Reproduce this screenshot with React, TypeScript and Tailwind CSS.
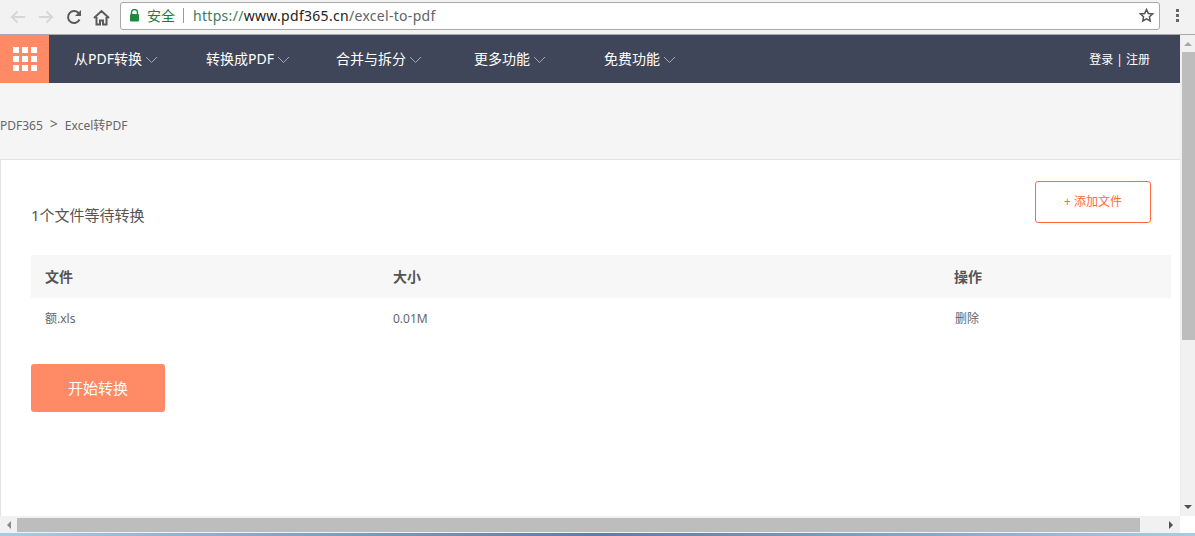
import React from "react";

const font = "font-['Noto_Sans','Noto_Sans_CJK_SC',sans-serif]";

const menus = [
  { label: "从PDF转换", cls: "w-[132px]" },
  { label: "转换成PDF", cls: "w-[130px]" },
  { label: "合并与拆分", cls: "w-[138px]" },
  { label: "更多功能", cls: "w-[130px]" },
  { label: "免费功能", cls: "w-[120px]" },
];

const Chevron = () => (
  <svg width="13" height="8" viewBox="0 0 13 8" fill="none" className="ml-[3px] mt-[3px]">
    <path d="M1 1l5.5 5.5L12 1" stroke="#a4a9b3" strokeWidth="1" />
  </svg>
);

const Toolbar = () => (
  <div className="h-[35px] shrink-0 flex items-center bg-[#f2f2f2] border-b border-[#a9a9a9]">
    <div className="w-[120px] shrink-0 flex items-center pl-[10px]">
      <svg width="16" height="16" viewBox="0 0 17 16" fill="none" stroke="#d6d6d6" strokeWidth="2">
        <path d="M16 8H2M8 2L2 8l6 6" />
      </svg>
      <svg width="16" height="16" viewBox="0 0 17 16" fill="none" stroke="#d6d6d6" strokeWidth="2" className="ml-[12px]">
        <path d="M1 8h14M9 2l6 6-6 6" />
      </svg>
      <svg width="16" height="16" viewBox="0 0 16 16" fill="none" stroke="#5a5a5a" strokeWidth="2" className="ml-[12px]">
        <path d="M13.5 10.5A6 6 0 1 1 12.3 3.8L14 5.5" />
        <path d="M15 1v6H9" fill="#5a5a5a" stroke="none" />
      </svg>
      <svg width="17" height="17" viewBox="0 0 17 17" fill="none" stroke="#5a5a5a" strokeWidth="2" className="ml-[11px]">
        <path d="M1 9l7.5-7L16 9M3.5 8v7.5h3.5v-4h3v4h3.5V8" />
      </svg>
    </div>
    <div className="w-[1040px] h-[28px] -mt-[3px] flex items-center bg-white border border-[#a9a9a9] rounded-[3px]">
      <svg width="11" height="13" viewBox="0 0 11 13" className="ml-[8px]">
        <path d="M2.5 5V3.5a3 3 0 0 1 6 0V5" fill="none" stroke="#1e8a3c" strokeWidth="1.4" />
        <rect x="1" y="5" width="9" height="7.5" rx="1" fill="#1e8a3c" />
      </svg>
      <span className="ml-[7px] text-[14px] leading-none text-[#1c7d36]">安全</span>
      <span className="ml-[8px] w-px h-[15px] bg-[#9a9a9a]" />
      <span className="ml-[9px] text-[14px] leading-none tracking-[0.3px] text-[#5f6368]">
        <span className="text-[#3f7a5a]">https://</span>
        <span className="text-[#222]">www.pdf365.cn</span>/excel-to-pdf
      </span>
      <svg width="15" height="15" viewBox="0 0 24 24" fill="none" stroke="#555" strokeWidth="2.4" className="ml-auto mr-[5px]">
        <path d="M12 2.5l2.9 6.2 6.8.8-5 4.6 1.3 6.7-6-3.4-6 3.4 1.3-6.7-5-4.6 6.8-.8z" />
      </svg>
    </div>
    <div className="ml-[16px] -mt-[3px] flex flex-col gap-[2px]">
      <span className="w-[3px] h-[3px] bg-[#666]" />
      <span className="w-[3px] h-[3px] bg-[#666]" />
      <span className="w-[3px] h-[3px] bg-[#666]" />
    </div>
  </div>
);

const Nav = () => (
  <div className="h-[48px] shrink-0 flex items-center bg-[#404659]">
    <div className="w-[49px] h-full flex items-center justify-center bg-[#ff8a65]">
      <div className="grid grid-cols-3 gap-[3px]">
        {Array.from({ length: 9 }).map((_, i) => (
          <span key={i} className="w-[6px] h-[6px] bg-white" />
        ))}
      </div>
    </div>
    <div className="flex items-center ml-[25px] pb-[2px] text-[14px] text-white">
      {menus.map((m) => (
        <div key={m.label} className={`flex items-center ${m.cls}`}>
          {m.label}
          <Chevron />
        </div>
      ))}
    </div>
    <div className="ml-auto mr-[30px] pt-[1px] text-[12px] text-white">登录 | 注册</div>
  </div>
);

const Content = () => (
  <div className="flex-1 min-h-0 bg-white border-l border-[#e3e3e3] pl-[30px] pr-[9px] relative">
    <div className="flex justify-between h-[95px] pr-[20px]">
      <div className="mt-[45px] text-[15px] leading-[20px] text-[#555]">1个文件等待转换</div>
      <button className="mt-[21px] w-[116px] h-[42px] border border-[#ff6a3c] rounded-[3px] text-[12px] text-[#ff6a3c]">
        + 添加文件
      </button>
    </div>
    <div className="h-[43px] flex items-center bg-[#f7f7f7] text-[14px] font-bold text-[#555]">
      <div className="w-[348px] pl-[14px]">文件</div>
      <div className="w-[561px] pl-[14px]">大小</div>
      <div className="pl-[14px]">操作</div>
    </div>
    <div className="h-[42px] flex items-center text-[12px] text-[#666]">
      <div className="w-[348px] pl-[14px]">额.xls</div>
      <div className="w-[561px] pl-[14px]">0.01M</div>
      <div className="pl-[15px]">删除</div>
    </div>
    <button className="mt-[24px] w-[134px] h-[48px] rounded-[3px] bg-[#ff8a65] text-[15px] text-white">开始转换</button>
  </div>
);

const VScroll = () => (
  <div className="w-[15px] shrink-0 flex flex-col bg-[#f1f1f1] border-l border-[#eeeeee]">
    <div className="h-[17px] flex items-center justify-center">
      <span className="w-0 h-0 border-x-[4px] border-x-transparent border-b-[4px] border-b-[#a6a6a6]" />
    </div>
    <div className="h-[288px] ml-[1px] bg-[#bdbdbd]" />
    <div className="flex-1" />
    <div className="h-[18px] flex items-center justify-center">
      <span className="w-0 h-0 border-x-[4px] border-x-transparent border-t-[4px] border-t-[#505050]" />
    </div>
  </div>
);

const HScroll = () => (
  <div className="h-[17px] shrink-0 flex items-center bg-[#f1f1f1]">
    <div className="w-[17px] flex justify-center">
      <span className="w-0 h-0 border-y-[4px] border-y-transparent border-r-[4px] border-r-[#8a8a8a]" />
    </div>
    <div className="w-[1123px] h-[14px] bg-[#bdbdbd]" />
    <div className="w-[40px] flex justify-end pr-[7px]">
      <span className="w-0 h-0 border-y-[4px] border-y-transparent border-l-[4px] border-l-[#505050]" />
    </div>
    <div className="flex-1 h-full bg-white" />
  </div>
);

export default function App() {
  return (
    <div className={`h-[536px] w-[1195px] flex flex-col overflow-hidden bg-white ${font}`}>
      <Toolbar />
      <div className="flex-1 min-h-0 flex">
        <div className="flex-1 min-w-0 flex flex-col bg-[#f5f5f5]">
          <Nav />
          <div className="h-[77px] shrink-0 flex items-center border-b border-[#e3e3e3] text-[12px] text-[#666] pt-[9px]">
            <span>PDF365</span>
            <span className="ml-[7px] mr-[7px] -mt-[4px] text-[14px] leading-none">&gt;</span>
            <span>Excel转PDF</span>
          </div>
          <Content />
        </div>
        <VScroll />
      </div>
      <HScroll />
      <div className="h-[3px] shrink-0 bg-gradient-to-r from-[#a8cbe6] via-[#5d7ea0] to-[#a8cbe6]" />
    </div>
  );
}
